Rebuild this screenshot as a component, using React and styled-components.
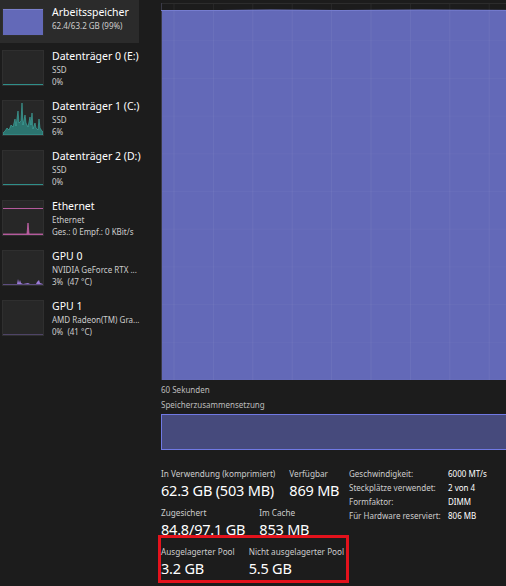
import React from "react";
import styled, { createGlobalStyle } from "styled-components";

const GlobalStyle = createGlobalStyle`
  html, body {
    margin: 0;
    padding: 0;
    background: #1c1c1c;
  }
  body {
    font-family: "Segoe UI", "Noto Sans", sans-serif;
    color: #ffffff;
  }
`;

const Page = styled.div`
  width: 506px;
  height: 586px;
  overflow: hidden;
  display: flex;
  background: #1c1c1c;
`;

const Sidebar = styled.div`
  width: 150px;
  flex-shrink: 0;
  display: flex;
  flex-direction: column;
  margin-top: -7px;
`;

const Item = styled.div`
  height: 50px;
  width: 139px;
  display: flex;
  align-items: center;
  gap: 8px;
  padding-left: 2px;
  box-sizing: border-box;
  background: ${(p) => (p.$active ? "#2b2b2b" : "transparent")};
`;

const Thumb = styled.div`
  width: 42px;
  height: ${(p) => (p.$short ? "28px" : "36px")};
  align-self: ${(p) => (p.$short ? "flex-end" : "center")};
  margin-bottom: ${(p) => (p.$short ? "7px" : "0")};
  flex-shrink: 0;
  background: #272727;
  box-sizing: border-box;
  border: 1px solid #2f2f2f;
  overflow: hidden;
  svg {
    display: block;
  }
`;

const ItemText = styled.div`
  display: flex;
  flex-direction: column;
  min-width: 0;
  white-space: pre;
`;

const ItemTitle = styled.div`
  font-size: 10.5px;
  line-height: 16px;
  color: #ffffff;
`;

const ItemSub = styled.div`
  font-size: 8px;
  line-height: 12px;
  color: #cdcdcd;
`;

const Main = styled.div`
  flex-shrink: 0;
  width: 380px;
  padding: 3px 0 0 11px;
  display: flex;
  flex-direction: column;
`;

const Chart = styled.div`
  height: 377px;
  svg {
    display: block;
  }
`;

const Caption = styled.div`
  font-size: 8px;
  line-height: 10px;
  color: #bdbdbd;
  margin-top: ${(p) => p.$top || "0"};
`;

const CompBar = styled.div`
  height: 36px;
  margin-top: 4px;
  background: #464a7c;
  border: 1px solid #7079e4;
  box-sizing: border-box;
`;

const Stats = styled.div`
  display: flex;
  align-items: flex-start;
  margin-top: 18px;
`;

const StatsLeft = styled.div`
  width: 188px;
  flex-shrink: 0;
  display: flex;
  flex-direction: column;
  gap: 7px;
`;

const StatRow = styled.div`
  display: flex;
  gap: 14px;
  white-space: nowrap;
`;

const Highlight = styled.div`
  margin-left: -3px;
  margin-top: -11px;
  padding: 8px 0 2px 0;
  width: 191px;
  box-sizing: border-box;
  border: 3px solid #e3121c;
`;

const Stat = styled.div`
  display: flex;
  flex-direction: column;
`;

const StatLabel = styled.div`
  font-size: 8.2px;
  line-height: 12px;
  color: #cdcdcd;
`;

const StatValue = styled.div`
  font-size: 14.5px;
  letter-spacing: -0.2px;
  line-height: 20px;
  color: #ffffff;
`;

const Specs = styled.div`
  display: grid;
  grid-template-columns: 99px auto;
  grid-auto-rows: 14px;
  align-content: start;
  align-items: center;
  margin-top: -1px;
`;

const SpecCell = styled.div`
  font-size: 8px;
  line-height: 12px;
  color: ${(p) => (p.$value ? "#ffffff" : "#cdcdcd")};
  white-space: nowrap;
`;

function MemThumb() {
  return (
    <svg width="40" height="26">
      <rect x="0" y="0" width="40" height="26" fill="#6369b8" />
      <line x1="0" y1="0.5" x2="40" y2="0.5" stroke="#7a80cc" />
    </svg>
  );
}

function DiskFlat() {
  return (
    <svg width="40" height="34">
      <line x1="0" y1="33.5" x2="40" y2="33.5" stroke="#2f8f8a" strokeWidth="1" />
    </svg>
  );
}

function DiskBusy() {
  const pts = [
    [0, 32], [2, 30], [4, 27], [6, 29], [8, 24], [10, 26], [12, 18], [13, 25],
    [15, 10], [16, 22], [18, 20], [19, 2], [20, 24], [22, 14], [23, 22],
    [25, 26], [27, 16], [28, 24], [29, 12], [30, 28], [32, 22], [33, 27],
    [35, 29], [36, 18], [37, 27], [39, 30], [40, 31],
  ];
  const d = "M0,34 " + pts.map((p) => `L${p[0]},${p[1]}`).join(" ") + " L40,34 Z";
  return (
    <svg width="40" height="34">
      <path d={d} fill="#2f8f88" fillOpacity="0.75" stroke="#42b0a8" strokeWidth="0.6" />
    </svg>
  );
}

function EthThumb() {
  return (
    <svg width="40" height="34">
      <line x1="0" y1="7.5" x2="40" y2="7.5" stroke="#b45a9c" strokeWidth="1" />
      <path d="M0,33 L24,33 L25,22 L26,33 L40,33" fill="#b45a9c" stroke="#c463a9" strokeWidth="0.8" />
      <line x1="0" y1="33.5" x2="40" y2="33.5" stroke="#b45a9c" strokeWidth="1" />
    </svg>
  );
}

function GpuBusy() {
  return (
    <svg width="40" height="34">
      <path
        d="M14,33 L15,28 L16,32 L17,29 L18,32 L20,33 L25,32 L27,33 L33,33 L34,31 L36,29 L37,32 L40,33 Z"
        fill="#9b7ad6"
      />
      <line x1="0" y1="33.5" x2="40" y2="33.5" stroke="#5d4d80" strokeWidth="1" />
    </svg>
  );
}

function GpuFlat() {
  return (
    <svg width="40" height="34">
      <line x1="0" y1="33.5" x2="40" y2="33.5" stroke="#4e4466" strokeWidth="1" />
    </svg>
  );
}

const devices = [
  { title: "Arbeitsspeicher", lines: ["62.4/63.2 GB (99%)"], thumb: <MemThumb />, active: true, short: true },
  { title: "Datenträger 0 (E:)", lines: ["SSD", "0%"], thumb: <DiskFlat /> },
  { title: "Datenträger 1 (C:)", lines: ["SSD", "6%"], thumb: <DiskBusy /> },
  { title: "Datenträger 2 (D:)", lines: ["SSD", "0%"], thumb: <DiskFlat /> },
  { title: "Ethernet", lines: ["Ethernet", "Ges.: 0 Empf.: 0 KBit/s"], thumb: <EthThumb /> },
  { title: "GPU 0", lines: ["NVIDIA GeForce RTX ...", "3%  (47 °C)"], thumb: <GpuBusy /> },
  { title: "GPU 1", lines: ["AMD Radeon(TM) Gra...", "0%  (41 °C)"], thumb: <GpuFlat /> },
];

function MemoryChart() {
  const w = 370;
  const h = 377;
  const xs = [];
  for (let x = 13; x < w; x += 39.4) xs.push(x);
  const ys = [];
  for (let y = 37.7; y < h; y += 37.7) ys.push(y);
  return (
    <svg width={w} height={h}>
      <rect x="0" y="0" width={w} height={h} fill="#1c1c1c" />
      <rect x="0" y="7" width={w} height={h - 7} fill="#6369b8" />
      {xs.map((x) => (
        <line key={"x" + x} x1={x} y1="0" x2={x} y2={h} stroke="#ffffff" strokeOpacity="0.06" />
      ))}
      {ys.map((y) => (
        <line key={"y" + y} x1="0" y1={y} x2={w} y2={y} stroke="#ffffff" strokeOpacity="0.03" />
      ))}
      <line x1="0" y1="0.5" x2={w} y2="0.5" stroke="#2c2c2c" />
      <line x1="0.5" y1="0" x2="0.5" y2={h} stroke="#3a3a48" />
      <path d={`M0,7.5 L60,7.5 L110,7 L180,7.5 L260,7 L${w},7.5`} stroke="#767dd0" fill="none" />
    </svg>
  );
}

export default function App() {
  return (
    <Page>
      <GlobalStyle />
      <Sidebar>
        {devices.map((d) => (
          <Item key={d.title} $active={d.active}>
            <Thumb $short={d.short}>{d.thumb}</Thumb>
            <ItemText>
              <ItemTitle>{d.title}</ItemTitle>
              {d.lines.map((l) => (
                <ItemSub key={l}>{l}</ItemSub>
              ))}
            </ItemText>
          </Item>
        ))}
      </Sidebar>
      <Main>
        <Chart>
          <MemoryChart />
        </Chart>
        <Caption $top="5px">60 Sekunden</Caption>
        <Caption $top="5px">Speicherzusammensetzung</Caption>
        <CompBar />
        <Stats>
          <StatsLeft>
            <StatRow>
              <Stat>
                <StatLabel>In Verwendung (komprimiert)</StatLabel>
                <StatValue>62.3 GB (503 MB)</StatValue>
              </Stat>
              <Stat>
                <StatLabel>Verfügbar</StatLabel>
                <StatValue>869 MB</StatValue>
              </Stat>
            </StatRow>
            <StatRow>
              <Stat>
                <StatLabel>Zugesichert</StatLabel>
                <StatValue>84.8/97.1 GB</StatValue>
              </Stat>
              <Stat>
                <StatLabel>Im Cache</StatLabel>
                <StatValue>853 MB</StatValue>
              </Stat>
            </StatRow>
            <Highlight>
              <StatRow>
                <Stat>
                  <StatLabel>Ausgelagerter Pool</StatLabel>
                  <StatValue>3.2 GB</StatValue>
                </Stat>
                <Stat>
                  <StatLabel>Nicht ausgelagerter Pool</StatLabel>
                  <StatValue>5.5 GB</StatValue>
                </Stat>
              </StatRow>
            </Highlight>
          </StatsLeft>
          <Specs>
            <SpecCell>Geschwindigkeit:</SpecCell>
            <SpecCell $value>6000 MT/s</SpecCell>
            <SpecCell>Steckplätze verwendet:</SpecCell>
            <SpecCell $value>2 von 4</SpecCell>
            <SpecCell>Formfaktor:</SpecCell>
            <SpecCell $value>DIMM</SpecCell>
            <SpecCell>Für Hardware reserviert:</SpecCell>
            <SpecCell $value>806 MB</SpecCell>
          </Specs>
        </Stats>
      </Main>
    </Page>
  );
}
